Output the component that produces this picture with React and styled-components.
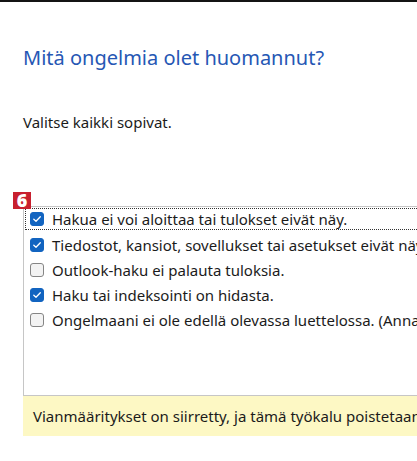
import styled, { createGlobalStyle } from 'styled-components';

const GlobalStyle = createGlobalStyle`
  html, body {
    margin: 0;
    padding: 0;
    background: #ffffff;
    overflow: hidden;
  }
  body {
    font-family: "Noto Sans", "Open Sans", sans-serif;
    color: #1b1b1b;
  }
`;

const Page = styled.div`
  width: 417px;
  height: 461px;
  border-top: 2px solid #141414;
  box-sizing: border-box;
  padding: 42px 0 0 23px;
  overflow: hidden;
`;

const Title = styled.h1`
  margin: 0;
  font-size: 20px;
  line-height: 27px;
  font-weight: 400;
  color: #2657b4;
  white-space: nowrap;
`;

const Hint = styled.p`
  margin: 41px 0 0 0;
  font-size: 15px;
  line-height: 20px;
  white-space: nowrap;
`;

const ListWrap = styled.div`
  position: relative;
  margin-top: 74px;
  width: 420px;
`;

const Badge = styled.span`
  position: absolute;
  left: -10px;
  top: -14px;
  width: 18px;
  height: 17px;
  background: #c8202f;
  color: #ffffff;
  font-family: "Open Sans", sans-serif;
  font-weight: 800;
  font-size: 18px;
  line-height: 17px;
  text-align: center;
  z-index: 2;
`;

const List = styled.div`
  height: 190px;
  border: 1px solid #c6c6c6;
  border-right: none;
  box-sizing: border-box;
  padding: 1px 0 0 1px;
  display: flex;
  flex-direction: column;
`;

const Row = styled.label`
  display: flex;
  align-items: center;
  gap: 8px;
  padding-left: 5px;
  box-sizing: border-box;
  font-size: 15px;
  white-space: nowrap;
  outline: ${(p) => (p.$focused ? '1px dotted #333' : 'none')};
  outline-offset: -1px;
  height: ${(p) => (p.$focused ? '22px' : '25px')};
  margin-bottom: ${(p) => (p.$focused ? '2px' : '0')};
`;

const Box = styled.span`
  flex: none;
  width: 14px;
  height: 14px;
  box-sizing: border-box;
  border-radius: 3px;
  display: flex;
  align-items: center;
  justify-content: center;
  background: ${(p) => (p.$checked ? '#1264c0' : '#f3f3f3')};
  border: 1px solid ${(p) => (p.$checked ? '#1264c0' : '#858585')};
`;

const Notice = styled.div`
  height: 40px;
  background: #fdf8c4;
  display: flex;
  align-items: center;
  padding-left: 10px;
  font-size: 15px;
  white-space: nowrap;
`;

const items = [
  { text: 'Hakua ei voi aloittaa tai tulokset eivät näy.', checked: true, focused: true },
  { text: 'Tiedostot, kansiot, sovellukset tai asetukset eivät näy hakutuloksissa.', checked: true },
  { text: 'Outlook-haku ei palauta tuloksia.', checked: false },
  { text: 'Haku tai indeksointi on hidasta.', checked: true },
  { text: 'Ongelmaani ei ole edellä olevassa luettelossa. (Anna lisätietoja.)', checked: false },
];

function Check({ checked }) {
  return (
    <Box $checked={checked}>
      {checked && (
        <svg width="10" height="10" viewBox="0 0 10 10">
          <path d="M1.8 5.2 L4 7.3 L8.3 2.8" fill="none" stroke="#ffffff" strokeWidth="1.3" strokeLinecap="round" strokeLinejoin="round" />
        </svg>
      )}
    </Box>
  );
}

export default function App() {
  return (
    <Page>
      <GlobalStyle />
      <Title>Mitä ongelmia olet huomannut?</Title>
      <Hint>Valitse kaikki sopivat.</Hint>
      <ListWrap>
        <Badge>6</Badge>
        <List>
          {items.map((el) => (
            <Row key={el.text} $focused={el.focused}>
              <Check checked={el.checked} />
              <span>{el.text}</span>
            </Row>
          ))}
        </List>
        <Notice>Vianmääritykset on siirretty, ja tämä työkalu poistetaan tulevaisuudessa.</Notice>
      </ListWrap>
    </Page>
  );
}
